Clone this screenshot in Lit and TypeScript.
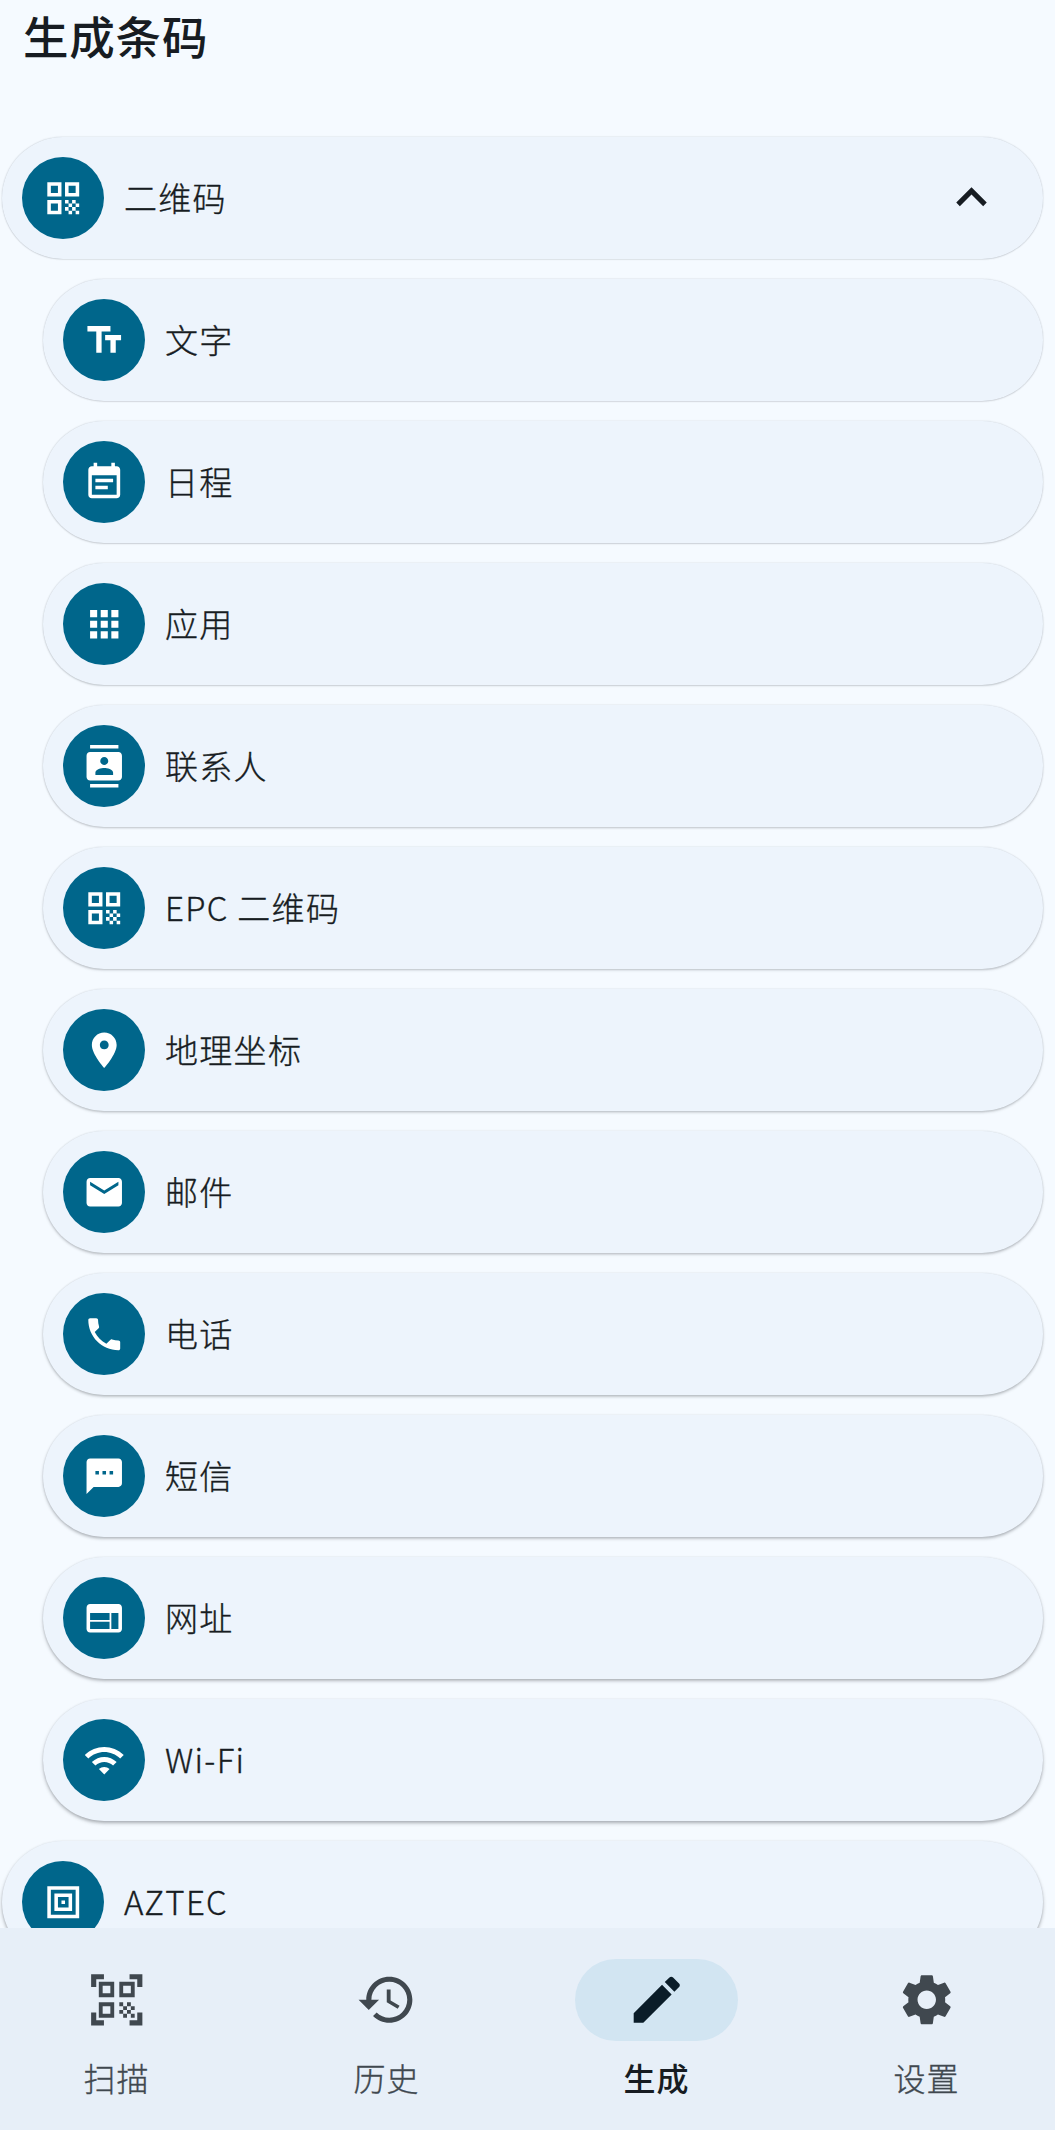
import { LitElement, html, css, svg } from "lit";
import { customElement, property } from "lit/decorators.js";

const QR = "M3 11h8V3H3zm2-6h4v4H5zM3 21h8v-8H3zm2-6h4v4H5zM13 3v8h8V3zm6 6h-4V5h4zM19 19h2v2h-2zM13 13h2v2h-2zM15 15h2v2h-2zM13 17h2v2h-2zM15 19h2v2h-2zM17 17h2v2h-2zM17 13h2v2h-2zM19 15h2v2h-2z";

const ICONS: Record<string, string> = {
  qr: QR,
  text: "M2.5 4v3h5v12h3V7h5V4zM21.5 9h-9v3h3v7h3v-7h3z",
  event: "M17 10H7v2h10zm2-7h-1V1h-2v2H8V1H6v2H5c-1.11 0-1.99.9-1.99 2L3 19c0 1.1.89 2 2 2h14c1.1 0 2-.9 2-2V5c0-1.1-.9-2-2-2m0 16H5V8h14zm-5-5H7v2h7z",
  apps: "M4 8h4V4H4zm6 12h4v-4h-4zm-6 0h4v-4H4zm0-6h4v-4H4zm6 0h4v-4h-4zm6-10v4h4V4zm-6 4h4V4h-4zm6 6h4v-4h-4zm0 6h4v-4h-4z",
  contact: "M20 0H4v2h16zM4 24h16v-2H4zM20 4H4c-1.1 0-2 .9-2 2v12c0 1.1.9 2 2 2h16c1.1 0 2-.9 2-2V6c0-1.1-.9-2-2-2m-8 2.75c1.24 0 2.25 1.01 2.25 2.25s-1.01 2.25-2.25 2.25S9.75 10.24 9.75 9 10.76 6.75 12 6.75M17 17H7v-1.5c0-1.67 3.33-2.5 5-2.5s5 .83 5 2.5z",
  place: "M12 2C8.13 2 5 5.13 5 9c0 5.25 7 13 7 13s7-7.75 7-13c0-3.87-3.13-7-7-7m0 9.5c-1.38 0-2.5-1.12-2.5-2.5s1.12-2.5 2.5-2.5 2.5 1.12 2.5 2.5-1.12 2.5-2.5 2.5",
  mail: "M20 4H4c-1.1 0-1.99.9-1.99 2L2 18c0 1.1.9 2 2 2h16c1.1 0 2-.9 2-2V6c0-1.1-.9-2-2-2m0 4-8 5-8-5V6l8 5 8-5z",
  phone: "M6.62 10.79c1.44 2.83 3.76 5.14 6.59 6.59l2.2-2.2c.27-.27.67-.36 1.02-.24 1.12.37 2.33.57 3.57.57.55 0 1 .45 1 1V20c0 .55-.45 1-1 1-9.39 0-17-7.61-17-17 0-.55.45-1 1-1h3.5c.55 0 1 .45 1 1 0 1.25.2 2.45.57 3.57.11.35.03.74-.25 1.02z",
  sms: "M20 2H4c-1.1 0-1.99.9-1.99 2L2 22l4-4h14c1.1 0 2-.9 2-2V4c0-1.1-.9-2-2-2M9 11H7V9h2zm4 0h-2V9h2zm4 0h-2V9h2z",
  web: "M20 4H4c-1.1 0-1.99.9-1.99 2L2 18c0 1.1.9 2 2 2h16c1.1 0 2-.9 2-2V6c0-1.1-.9-2-2-2m-5 14H4v-4h11zm0-5H4V9h11zm5 5h-4V9h4z",
  wifi: "m1 9 2 2c4.97-4.97 13.03-4.97 18 0l2-2C16.93 2.93 7.08 2.93 1 9m8 8 3 3 3-3c-1.65-1.66-4.34-1.66-6 0m-4-4 2 2c2.76-2.76 7.24-2.76 10 0l2-2C15.14 9.14 8.87 9.14 5 13",
  aztec: "M3 3v18h18V3zm2 2h14v14H5zM7 7v10h10V7zm2 2h6v6H9zM11 11h2v2h-2z",
  up: "M7.41 15.41 12 10.83l4.59 4.58L18 14l-6-6-6 6z",
  scan: "M2 2h5v2H4v3H2zM17 2h5v5h-2V4h-3zM2 17h2v3h3v2H2zM20 17h2v5h-5v-2h3zM5 5v6h6V5zm1.5 1.5h3v3h-3zM13 5v6h6V5zm1.5 1.5h3v3h-3zM5 13v6h6v-6zm1.5 1.5h3v3h-3zM13 13h1.5v1.5H13zM16 13h1.5v1.5H16zM14.5 14.5H16V16h-1.5zM17.5 14.5H19V16h-1.5zM13 16h1.5v1.5H13zM16 16h1.5v1.5H16zM14.5 17.5H16V19h-1.5zM17.5 17.5H19V19h-1.5z",
  history: "M13 3c-4.97 0-9 4.03-9 9H1l3.89 3.89.07.14L9 12H6c0-3.87 3.13-7 7-7s7 3.13 7 7-3.13 7-7 7c-1.93 0-3.68-.79-4.94-2.06l-1.42 1.42C8.27 19.99 10.51 21 13 21c4.97 0 9-4.03 9-9s-4.03-9-9-9m-1 5v5l4.28 2.54.72-1.21-3.5-2.08V8z",
  edit: "M3 17.25V21h3.75L17.81 9.94l-3.75-3.75zM20.71 7.04c.39-.39.39-1.02 0-1.41l-2.34-2.34c-.39-.39-1.02-.39-1.41 0l-1.83 1.83 3.75 3.75z",
  settings: "M19.14 12.94c.04-.3.06-.61.06-.94 0-.32-.02-.64-.07-.94l2.03-1.58c.18-.14.23-.41.12-.61l-1.92-3.32c-.12-.22-.37-.29-.59-.22l-2.39.96c-.5-.38-1.03-.7-1.62-.94l-.36-2.54c-.04-.24-.24-.41-.48-.41h-3.84c-.24 0-.43.17-.47.41l-.36 2.54c-.59.24-1.13.57-1.62.94l-2.39-.96c-.22-.08-.47 0-.59.22L2.74 8.87c-.12.21-.08.47.12.61l2.03 1.58c-.05.3-.09.63-.09.94s.02.64.07.94l-2.03 1.58c-.18.14-.23.41-.12.61l1.92 3.32c.12.22.37.29.59.22l2.39-.96c.5.38 1.03.7 1.62.94l.36 2.54c.05.24.24.41.48.41h3.84c.24 0 .44-.17.47-.41l.36-2.54c.59-.24 1.13-.56 1.62-.94l2.39.96c.22.08.47 0 .59-.22l1.92-3.32c.12-.22.07-.47-.12-.61zM12 15.6c-1.98 0-3.6-1.62-3.6-3.6s1.62-3.6 3.6-3.6 3.6 1.62 3.6 3.6-1.62 3.6-3.6 3.6",
};

const FORMATS = [
  { icon: "text", label: "文字" },
  { icon: "event", label: "日程" },
  { icon: "apps", label: "应用" },
  { icon: "contact", label: "联系人" },
  { icon: "qr", label: "EPC 二维码" },
  { icon: "place", label: "地理坐标" },
  { icon: "mail", label: "邮件" },
  { icon: "phone", label: "电话" },
  { icon: "sms", label: "短信" },
  { icon: "web", label: "网址" },
  { icon: "wifi", label: "Wi-Fi" },
];

const TABS = [
  { icon: "scan", label: "扫描" },
  { icon: "history", label: "历史" },
  { icon: "edit", label: "生成", active: true },
  { icon: "settings", label: "设置" },
];

@customElement("md-icon")
class MdIcon extends LitElement {
  @property() name = "";
  static styles = css`
    :host { display: block; flex: none; }
    .glyph { display: block; width: 100%; height: 100%; fill: currentColor; fill-rule: evenodd; }
  `;
  render() {
    return html`<svg class="glyph" viewBox="0 0 24 24" overflow="visible">${svg`<path d=${ICONS[this.name]}></path>`}</svg>`;
  }
}

@customElement("format-row")
class FormatRow extends LitElement {
  @property() icon = "";
  @property() label = "";
  @property({ type: Boolean }) expanded = false;
  @property({ type: Number }) depth = 0;
  static styles = css`
    :host { display: block; }
    .card {
      box-sizing: border-box;
      height: 122.5px;
      border-radius: 62px;
      background: #edf4fc;
      display: flex;
      align-items: center;
      gap: 20px;
      padding: 0 61px 0 20px;
      box-shadow: 0 0 1.5px rgba(70, 75, 85, var(--edge)), 0 var(--drop) var(--soft) rgba(60, 65, 70, var(--shade));
    }
    .disc {
      width: 82px;
      height: 82px;
      border-radius: 50%;
      background: #00668b;
      color: #fff;
      display: flex;
      align-items: center;
      justify-content: center;
    }
    .icon { width: 42.5px; height: 42.5px; }
    .label {
      flex: 1;
      font-size: 33px;
      letter-spacing: 1.3px;
      line-height: 48px;
      color: #171c22;
      -webkit-text-stroke: 0.35px currentColor;
      padding-bottom: 1px;
    }
    .chevron { width: 61px; height: 61px; color: #171c22; margin-right: -20px; }
  `;
  render() {
    const d = this.depth;
    const vars = `--edge:${(0.28 - d * 0.014).toFixed(3)};--drop:${(0.6 + d * 0.14).toFixed(2)}px;--soft:${(1.2 + d * 0.2).toFixed(2)}px;--shade:${(0.14 + d * 0.022).toFixed(3)}`;
    return html`<div class="card" style=${vars}>
      <div class="disc"><md-icon class="icon" name=${this.icon}></md-icon></div>
      <div class="label">${this.label}</div>
      ${this.expanded ? html`<md-icon class="chevron" name="up"></md-icon>` : ""}
    </div>`;
  }
}

@customElement("app-root")
class AppRoot extends LitElement {
  static styles = css`
    :host {
      display: flex;
      flex-direction: column;
      width: 1055px;
      height: 2130px;
      overflow: hidden;
      background: #f5faff;
      font-family: "Noto Sans CJK SC", "Noto Sans", sans-serif;
      font-weight: 300;
    }
    .title {
      flex: none;
      box-sizing: border-box;
      height: 136.5px;
      margin: 0;
      padding: 1.5px 23px 0;
      font-size: 45.5px;
      line-height: 66px;
      letter-spacing: 0.8px;
      font-weight: 500;
      color: #171c22;
    }
    .list {
      flex: 1;
      min-height: 0;
      overflow: hidden;
      margin-top: -10px;
      padding: 10px 12.5px 0 2px;
      display: flex;
      flex-direction: column;
      gap: 19.5px;
    }
    .nested { display: flex; flex-direction: column; gap: 19.5px; padding-left: 41px; }
    .nav {
      flex: none;
      box-sizing: border-box;
      height: 202px;
      background: #e7eff8;
      display: flex;
      gap: 37px;
      padding-top: 30.5px;
    }
    .tab {
      flex: none;
      width: 233px;
      display: flex;
      flex-direction: column;
      align-items: center;
      color: #40484f;
    }
    .pill {
      width: 163.5px;
      height: 82.5px;
      border-radius: 42px;
      display: flex;
      align-items: center;
      justify-content: center;
    }
    .tab-icon { width: 61.5px; height: 61.5px; }
    .tab-label {
      font-size: 32px;
      line-height: 46px;
      letter-spacing: 1px;
      margin-top: 12.5px;
      -webkit-text-stroke: 0.35px currentColor;
    }
    .active { color: #171c22; }
    .active .tab-label { font-weight: 500; -webkit-text-stroke: 0; }
    .active .pill { background: #d2e5f2; color: #0b1d29; }
  `;
  render() {
    return html`
      <h1 class="title">生成条码</h1>
      <div class="list">
        <format-row icon="qr" label="二维码" expanded></format-row>
        <div class="nested">
          ${FORMATS.map((f, i) => html`<format-row icon=${f.icon} label=${f.label} .depth=${i + 1}></format-row>`)}
        </div>
        <format-row icon="aztec" label="AZTEC" .depth=${12}></format-row>
      </div>
      <nav class="nav">
        ${TABS.map(
          (t) => html`<div class=${t.active ? "tab active" : "tab"}>
            <div class="pill"><md-icon class="tab-icon" name=${t.icon}></md-icon></div>
            <div class="tab-label">${t.label}</div>
          </div>`
        )}
      </nav>
    `;
  }
}
